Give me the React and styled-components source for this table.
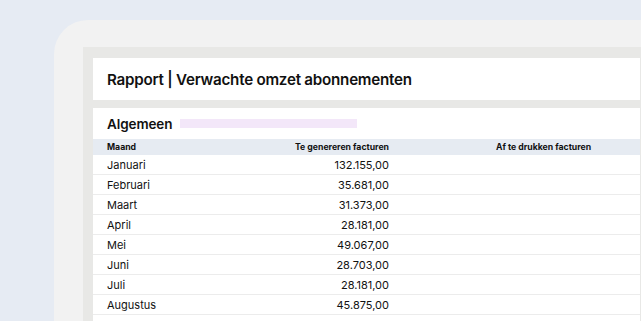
import styled, { createGlobalStyle } from "styled-components";

const GlobalStyle = createGlobalStyle`
  html, body {
    margin: 0;
    padding: 0;
    background: #e6ebf3;
    overflow: hidden;
  }
  body {
    font-family: Inter, "Noto Sans", sans-serif;
    color: #111;
  }
`;

const Page = styled.div`
  width: 641px;
  height: 321px;
  padding: 20px 0 0 54px;
  box-sizing: border-box;
  display: flex;
`;

const Frame = styled.div`
  flex: 1;
  background: #f2f2f2;
  border-top-left-radius: 34px;
  padding: 27px 0 0 29px;
  display: flex;
`;

const Canvas = styled.div`
  flex: 1;
  background: #e8e8e6;
  padding: 11px 1px 0 10px;
  display: flex;
  flex-direction: column;
  gap: 8px;
`;

const Card = styled.div`
  background: #fff;
  flex: ${(p) => (p.$grow ? 1 : "none")};
`;

const TitleBar = styled(Card)`
  height: 42px;
  display: flex;
  align-items: center;
  padding-left: 14px;
`;

const Title = styled.h1`
  margin: 0;
  font-size: 15.2px;
  font-weight: 600;
  letter-spacing: -0.25px;
  padding-top: 1px;
`;

const SectionHead = styled.div`
  height: 31px;
  display: flex;
  align-items: center;
  gap: 8px;
  padding-left: 14px;
`;

const SectionTitle = styled.h2`
  margin: 0;
  font-size: 13.5px;
  font-weight: 600;
  letter-spacing: -0.1px;
`;

const Placeholder = styled.div`
  width: 177px;
  height: 9px;
  background: #f3e7f9;
`;

const Row = styled.div`
  display: grid;
  grid-template-columns: 140px 142px 1fr;
  align-items: center;
  padding-left: 14px;
  height: ${(p) => (p.$head ? "16px" : "19px")};
  background: ${(p) => (p.$head ? "#e6ebf2" : "#fff")};
  border-bottom: ${(p) => (p.$head ? "none" : "1px solid #ececec")};
  font-size: ${(p) => (p.$head ? "8.7px" : "11px")};
  font-weight: ${(p) => (p.$head ? 700 : 400)};
`;

const Cell = styled.div`
  white-space: nowrap;
  text-align: ${(p) => p.$align || "left"};
  padding-left: ${(p) => p.$indent || 0}px;
`;

const months = [
  ["Januari", "132.155,00"],
  ["Februari", "35.681,00"],
  ["Maart", "31.373,00"],
  ["April", "28.181,00"],
  ["Mei", "49.067,00"],
  ["Juni", "28.703,00"],
  ["Juli", "28.181,00"],
  ["Augustus", "45.875,00"],
];

export default function App() {
  return (
    <>
      <GlobalStyle />
      <Page>
        <Frame>
          <Canvas>
            <TitleBar>
              <Title>Rapport | Verwachte omzet abonnementen</Title>
            </TitleBar>
            <Card $grow>
              <SectionHead>
                <SectionTitle>Algemeen</SectionTitle>
                <Placeholder />
              </SectionHead>
              <Row $head>
                <Cell>Maand</Cell>
                <Cell $align="right">Te genereren facturen</Cell>
                <Cell $indent={107}>Af te drukken facturen</Cell>
              </Row>
              {months.map(([name, amount]) => (
                <Row key={name}>
                  <Cell>{name}</Cell>
                  <Cell $align="right">{amount}</Cell>
                  <Cell />
                </Row>
              ))}
            </Card>
          </Canvas>
        </Frame>
      </Page>
    </>
  );
}
